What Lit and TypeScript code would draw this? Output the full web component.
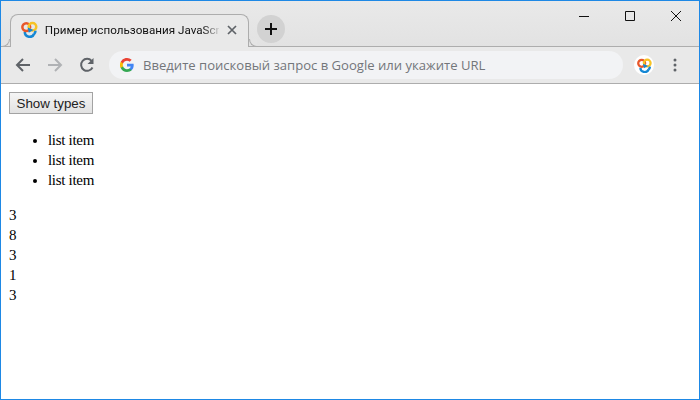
import { LitElement, html, css } from "lit";
import { customElement } from "lit/decorators.js";

const logo = (size: number) => html`<svg width=${size} height=${size} viewBox="0 0 16 16" fill="none" stroke-width="2.4">
  <path d="M3.6 10.4a4.6 4.6 0 0 0 8.9 1.6" stroke="#1487d4"></path>
  <circle cx="5" cy="5.7" r="3.7" stroke="#e8572a"></circle>
  <circle cx="10.9" cy="5.4" r="3.6" stroke="#f7c325"></circle>
  <path d="M6.4 6 L11.8 8.4 L7.4 11 Z" fill="#1487d4" stroke="none"></path>
  <path d="M13.8 9.2a4 4 0 0 1-1.4 3" stroke="#1487d4"></path>
</svg>`;

@customElement("app-root")
export class AppRoot extends LitElement {
  static styles = css`
    :host { display: block; width: 700px; height: 400px; box-sizing: border-box; border: 1px solid #1e88e5; overflow: hidden; background: #fff; }
    .titlebar { height: 46px; display: flex; background: linear-gradient(#e9e9e9, #e2e2e2); position: relative; }
    .titlebar::after { content: ""; position: absolute; left: 0; right: 0; bottom: 0; height: 1px; background: #adadad; }
    .tab { position: relative; z-index: 1; box-sizing: border-box; width: 239px; height: 33px; margin: 13px 0 0 9px; background: #e9e9e9; border: 1px solid #adadad; border-bottom: 0; border-radius: 8px 8px 0 0; display: flex; align-items: center; padding: 0 11px 3px 10px; }
    .tab::before, .tab::after { content: ""; position: absolute; bottom: 0; width: 8px; height: 8px; box-sizing: border-box; border-bottom: 1px solid #adadad; }
    .tab::before { left: -9px; border-right: 1px solid #adadad; border-bottom-right-radius: 8px; background: #e4e4e4; }
    .tab::after { right: -9px; border-left: 1px solid #adadad; border-bottom-left-radius: 8px; background: #e4e4e4; }
    .tab-title { margin-left: 7px; width: 176px; font: 11.65px/16px Roboto, sans-serif; color: #111; white-space: nowrap; overflow: hidden; -webkit-mask-image: linear-gradient(90deg, #000 158px, transparent 176px); mask-image: linear-gradient(90deg, #000 158px, transparent 176px); }
    .tab-close { margin-left: 8px; display: flex; }
    .newtab { width: 28px; height: 28px; border-radius: 50%; background: #d2d2d2; margin: 14px 0 0 8px; display: flex; align-items: center; justify-content: center; }
    .controls { margin-left: auto; display: flex; align-items: flex-start; }
    .ctl { width: 46px; height: 30px; display: flex; align-items: center; justify-content: center; }
    .toolbar { height: 37px; box-sizing: border-box; background: #e9e9e9; border-bottom: 1px solid #adadad; display: flex; align-items: center; }
    .nav { width: 32px; display: flex; justify-content: center; }
    .nav:first-child { margin-left: 6px; }
    .omni { width: 514px; height: 28px; margin-left: 6px; background: #f2f3f5; border-radius: 14px; display: flex; align-items: center; padding-left: 11px; box-sizing: border-box; }
    .omni span { margin-left: 9px; font: 13.08px/18px "Open Sans", sans-serif; color: #73767a; white-space: nowrap; }
    .ext { width: 20px; height: 20px; border-radius: 50%; background: #fff; margin-left: 11px; display: flex; align-items: center; justify-content: center; }
    .menu { margin-left: 19px; display: flex; }
    .content { padding: 8px; font: 15px/20px "Liberation Serif", serif; letter-spacing: -0.3px; color: #000; }
    button { display: block; box-sizing: border-box; width: 84px; height: 22px; padding: 0; border: 1px solid #a3a3a3; background: linear-gradient(#f5f5f5, #e2e2e2); font: 13.33px "Liberation Sans", sans-serif; color: #222; }
    ul { margin: 16px 0 15px; padding-left: 39px; }
  `;
  render() {
    return html`
      <div class="titlebar">
        <div class="tab">
          ${logo(17)}
          <div class="tab-title">Пример использования JavaScript</div>
          <div class="tab-close"><svg width="10" height="10" viewBox="0 0 10 10" stroke="#5f6368" stroke-width="1.7"><path d="M1 1l8 8M9 1l-8 8"></path></svg></div>
        </div>
        <div class="newtab"><svg width="12" height="12" viewBox="0 0 12 12" stroke="#111" stroke-width="2"><path d="M6 0v12M0 6h12"></path></svg></div>
        <div class="controls">
          <div class="ctl"><svg width="10" height="10" viewBox="0 0 10 10" stroke="#111"><path d="M0 5.5h10"></path></svg></div>
          <div class="ctl"><svg width="10" height="10" viewBox="0 0 10 10" stroke="#111" fill="none"><path d="M.5.5h9v9h-9z"></path></svg></div>
          <div class="ctl"><svg width="10" height="10" viewBox="0 0 10 10" stroke="#111"><path d="M0 0l10 10M10 0L0 10"></path></svg></div>
        </div>
      </div>
      <div class="toolbar">
        <div class="nav"><svg width="16" height="16" viewBox="0 0 16 16" fill="none" stroke="#5f6368" stroke-width="2"><path d="M15 8H2M8 2L2 8l6 6"></path></svg></div>
        <div class="nav"><svg width="16" height="16" viewBox="0 0 16 16" fill="none" stroke="#b0b2b5" stroke-width="2"><path d="M1 8h13M8 2l6 6-6 6"></path></svg></div>
        <div class="nav"><svg width="16" height="16" viewBox="0 0 16 16" fill="none" stroke="#5f6368" stroke-width="2"><path d="M13.5 10.5A6 6 0 1 1 12.6 3.8"></path><path d="M14.5 1v6h-6z" fill="#5f6368" stroke="none"></path></svg></div>
        <div class="omni">
          <svg width="14" height="14" viewBox="0 0 18 18">
            <path fill="#4285f4" d="M17.6 9.2c0-.6-.1-1.2-.2-1.8H9v3.4h4.8a4.1 4.1 0 0 1-1.8 2.7v2.3h2.9c1.7-1.6 2.7-3.9 2.7-6.6z"></path>
            <path fill="#34a853" d="M9 18c2.4 0 4.5-.8 6-2.2l-2.9-2.3c-.8.5-1.8.9-3.1.9-2.4 0-4.4-1.6-5.1-3.8H.9v2.3A9 9 0 0 0 9 18z"></path>
            <path fill="#fbbc05" d="M3.9 10.6a5.4 5.4 0 0 1 0-3.4V4.9H.9a9 9 0 0 0 0 8.1z"></path>
            <path fill="#ea4335" d="M9 3.6c1.3 0 2.5.5 3.4 1.3L15 2.4A9 9 0 0 0 .9 4.9l3 2.3C4.6 5.1 6.6 3.6 9 3.6z"></path>
          </svg>
          <span>Введите поисковый запрос в Google или укажите URL</span>
        </div>
        <div class="ext">${logo(15)}</div>
        <div class="menu"><svg width="4" height="14" viewBox="0 0 4 14" fill="#5f6368"><circle cx="2" cy="2" r="1.5"></circle><circle cx="2" cy="7" r="1.5"></circle><circle cx="2" cy="12" r="1.5"></circle></svg></div>
      </div>
      <div class="content">
        <button>Show types</button>
        <ul><li>list item</li><li>list item</li><li>list item</li></ul>
        <div><div>3</div><div>8</div><div>3</div><div>1</div><div>3</div></div>
      </div>
    `;
  }
}
